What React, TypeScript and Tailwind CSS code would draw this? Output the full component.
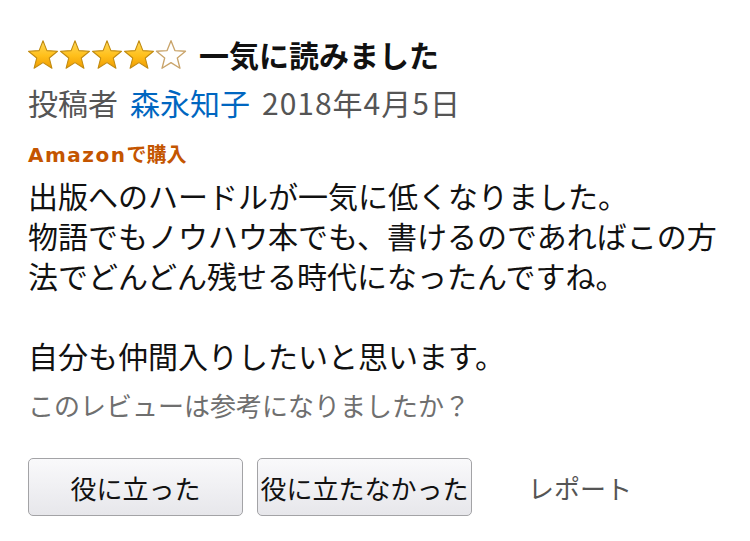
import React from 'react';

const STAR_POINTS =
  '12,1.3 14.94,8.76 22.94,9.25 16.76,14.35 18.76,22.1 12,17.8 5.24,22.1 7.24,14.35 1.06,9.25 9.06,8.76';

function Star({ filled, id }: { filled: boolean; id: string }) {
  return (
    <svg viewBox="0 0 24 23.4" className="h-[31px] w-[32px]">
      <defs>
        <linearGradient id={id} x1="0" y1="0" x2="0" y2="1">
          <stop offset="0%" stopColor="#ffd95a" />
          <stop offset="55%" stopColor="#ffbf1a" />
          <stop offset="100%" stopColor="#f09c00" />
        </linearGradient>
      </defs>
      <polygon
        points={STAR_POINTS}
        fill={filled ? `url(#${id})` : '#ffffff'}
        stroke={filled ? '#c08a10' : '#c9a46a'}
        strokeWidth={filled ? 0.8 : 1}
        strokeLinejoin="round"
      />
    </svg>
  );
}

export default function App() {
  const rating = 4;

  return (
    <div className="min-h-screen w-[750px] bg-white px-[28px] pt-[36px] font-['Noto_Sans_CJK_JP',sans-serif] text-[#111111]">
      {/* Title */}
      <div className="flex items-center">
        <div className="-ml-[1px] flex">
          {[0, 1, 2, 3, 4].map((i) => (
            <Star key={i} filled={i < rating} id={`star-grad-${i}`} />
          ))}
        </div>
        <h1 className="ml-[12px] text-[30px] font-bold leading-[36px]">一気に読みました</h1>
      </div>

      {/* Meta */}
      <div className="mt-[12px] flex gap-[12px] text-[30px] leading-[36px] text-[#555555]">
        <span>投稿者</span>
        <span className="text-[#0066c0]">森永知子</span>
        <span className="tracking-[1px]">2018年4月5日</span>
      </div>

      {/* Verified purchase */}
      <div className="mt-[20px] text-[20px] font-bold leading-[28px] text-[#c45500]">
        <span className="font-['DejaVu_Sans',sans-serif] tracking-[1.5px]">Amazon</span>で購入
      </div>

      {/* Body */}
      <p className="mt-[6px] text-[30px] leading-[40px]">
        出版へのハードルが一気に低くなりました。
        <br />
        物語でもノウハウ本でも、書けるのであればこの方法でどんどん残せる時代になったんですね。
        <br />
        <br />
        自分も仲間入りしたいと思います。
      </p>

      {/* Helpful */}
      <p className="mt-[13px] text-[26px] leading-[34px] text-[#6f6f6f]">このレビューは参考になりましたか？</p>

      <div className="mt-[36px] flex items-center">
        <button className="h-[58px] w-[215px] rounded-[5px] border border-[#a3a3a6] bg-gradient-to-b from-[#f9f9fb] to-[#e7e7eb] text-[26px] text-[#111111]">
          役に立った
        </button>
        <button className="ml-[14px] h-[58px] w-[215px] rounded-[5px] border border-[#a3a3a6] bg-gradient-to-b from-[#f9f9fb] to-[#e7e7eb] text-[26px] text-[#111111]">
          役に立たなかった
        </button>
        <span className="ml-[56px] text-[26px] text-[#555555]">レポート</span>
      </div>
    </div>
  );
}
